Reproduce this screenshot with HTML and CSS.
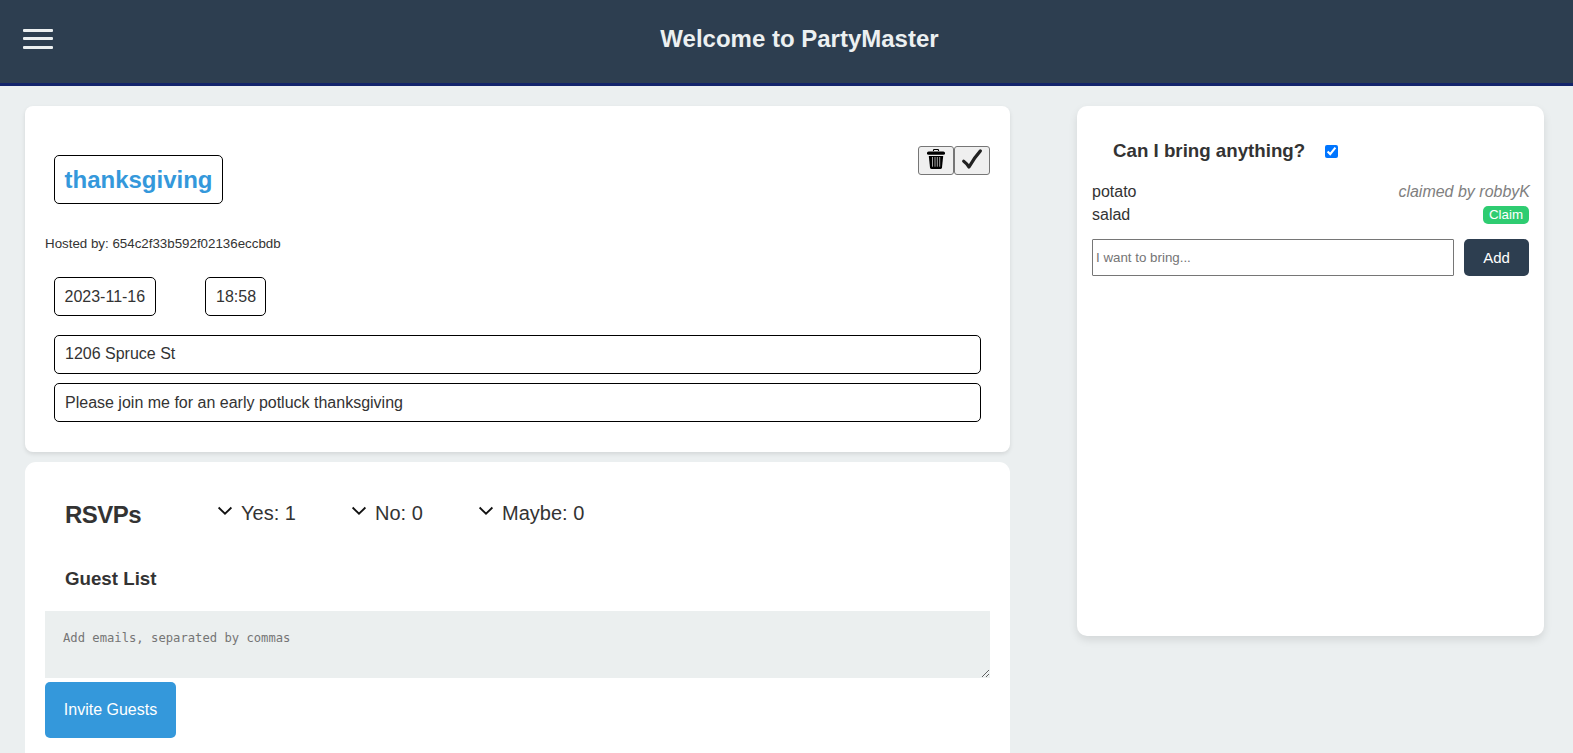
FILE: index.html
```html
<!DOCTYPE html>
<html lang="en">
<head>
<meta charset="utf-8">
<title>PartyMaster</title>
<link rel="stylesheet" href="styles.css">
</head>
<body>
<header class="header">
  <div class="burger"><span class="burger-line"></span><span class="burger-line"></span><span class="burger-line"></span></div>
  <h1 class="header-title">Welcome to PartyMaster</h1>
</header>
<main class="page">
  <div class="main-column">
    <section class="card event">
      <div class="event-top">
        <h2 class="field event-title">thanksgiving</h2>
        <div class="actions">
          <button class="icon-button" aria-label="Delete"><svg width="20" height="22" viewBox="0 0 20 22"><path d="M7.5 3V2.1Q7.5 1.5 8.2 1.5h3.6q.7 0 .7.6V3" fill="none" stroke="#000" stroke-width="1.1"/><rect x="1" y="3.4" width="18" height="3.4" rx="1.6"/><path d="M2.8 8h14.4l-1.2 11.4q-.2 1.6-1.8 1.6H5.8q-1.6 0-1.8-1.6z"/><path d="M6.5 9v9.7M9 9v9.7M11.3 9v9.7M13.7 9v9.7" stroke="#b8b8b8" stroke-width=".9"/></svg></button>
          <button class="icon-button" aria-label="Save"><svg width="22" height="22" viewBox="0 0 22 22"><path d="M2.7 13.2Q5.3 15 8 19 13 10 19.4 2.9" fill="none" stroke="#212121" stroke-width="3.2" stroke-linecap="round" stroke-linejoin="round"/></svg></button>
        </div>
      </div>
      <p class="host">Hosted by: 654c2f33b592f02136eccbdb</p>
      <div class="when"><span class="field date">2023-11-16</span><span class="field time">18:58</span></div>
      <p class="field address">1206 Spruce St</p>
      <p class="field">Please join me for an early potluck thanksgiving</p>
    </section>
    <section class="card rsvp">
      <div class="rsvp-top">
        <h2 class="rsvp-title">RSVPs</h2>
        <div class="count yes"><svg class="chevron" viewBox="0 0 16 10"><path d="M1.6 1.5 8 7.7l6.4-6.2"/></svg>Yes: 1</div>
        <div class="count no"><svg class="chevron" viewBox="0 0 16 10"><path d="M1.6 1.5 8 7.7l6.4-6.2"/></svg>No: 0</div>
        <div class="count"><svg class="chevron" viewBox="0 0 16 10"><path d="M1.6 1.5 8 7.7l6.4-6.2"/></svg>Maybe: 0</div>
      </div>
      <h3 class="guest-title">Guest List</h3>
      <textarea class="emails" placeholder="Add emails, separated by commas"></textarea>
      <button class="button invite">Invite Guests</button>
    </section>
  </div>
  <aside class="card bring">
    <div class="bring-top"><h3 class="bring-title">Can I bring anything?</h3><input class="toggle" type="checkbox" checked></div>
    <div class="item"><span>potato</span><em class="claimed">claimed by robbyK</em></div>
    <div class="item"><span>salad</span><button class="claim">Claim</button></div>
    <div class="add-row"><input class="wish" type="text" placeholder="I want to bring..."><button class="button add">Add</button></div>
  </aside>
</main>
</body>
</html>
```
FILE: styles.css
```css
* { box-sizing: border-box; }
body {
  margin: 0;
  height: 753px;
  overflow: hidden;
  background: #ebeff0;
  color: #333;
  font: 16px/17px "Liberation Sans", Arial, sans-serif;
}
h1, h2, h3, p { margin: 0; }
button { font-family: inherit; }

.header {
  display: flex;
  align-items: flex-start;
  height: 86px;
  padding: 25px 23px;
  background: #2d3e50;
  border-bottom: 3px solid #13246b;
  color: #ecf0f1;
}
.burger { display: flex; flex-direction: column; gap: 5px; width: 30px; padding-top: 4px; }
.burger-line { height: 3px; border-radius: 1px; background: #ecf0f1; }
.burger-line:last-child { margin-top: 1px; }
.header-title { flex: 1; padding-right: 4px; text-align: center; font-size: 24px; line-height: 28px; }

.page { display: flex; align-items: flex-start; gap: 67px; height: 667px; padding: 20px 0 0 25px; }
.main-column { display: flex; flex-direction: column; gap: 10px; width: 985px; }
.card { background: #fff; }

.event { height: 346px; padding: 40px 20px 0; border-radius: 8px; box-shadow: 0 2px 4px rgba(0, 0, 0, .1); }
.event-top { display: flex; justify-content: space-between; align-items: flex-start; }
.field { margin: 0 9px; padding: 10px; border: 1px solid #000; border-radius: 5px; }
.event-title { width: 169px; margin-top: 9px; padding-left: 9.5px; color: #3498db; font-size: 24px; line-height: 27px; }
.actions { display: flex; }
.icon-button {
  display: flex; justify-content: center; align-items: flex-start;
  width: 36px; height: 29px; padding: 1px 0 0;
  border: 1px solid #767676; border-radius: 3px; background: #efefef;
}
.host { margin-top: 31px; font-size: 13.33px; }
.when { display: flex; gap: 31px; margin: 25px 0 19px; }
.date { width: 102px; padding-left: 9.5px; white-space: nowrap; }
.time { width: 61px; padding-right: 9px; }
.address { margin-bottom: 9px; padding: 9px 10px 11px; }

.rsvp { height: 291px; padding: 39px 20px 0; border-radius: 11px 11px 0 0; }
.rsvp-top { display: flex; align-items: flex-start; padding-left: 20px; }
.rsvp-title { width: 152px; font-size: 24px; line-height: 28px; letter-spacing: -.5px; }
.count { display: flex; align-items: center; gap: 8px; font-size: 20px; line-height: 24px; }
.yes { width: 134px; }
.no { width: 127px; }
.chevron { width: 16px; height: 10px; margin-top: -4px; fill: none; stroke: #111; stroke-width: 1.8; }
.guest-title { margin: 39px 20px 0; font-size: 18.72px; line-height: 22px; }
.emails {
  display: block; width: 945px; height: 67px; margin-top: 21px; padding: 20px 18px;
  border: 0; background: #ebefef; font: 12.2px/15px "DejaVu Sans Mono", monospace;
}
.emails::placeholder, .wish::placeholder { color: #757575; }
.button { border: 0; border-radius: 5px; color: #fff; font-size: 16px; }
.invite { width: 131px; height: 56px; margin-top: 4px; background: #3498db; }

.bring { width: 467px; height: 530px; padding: 33px 15px 0; border-radius: 10px; box-shadow: 0 4px 8px rgba(0, 0, 0, .1); }
.bring-top { display: flex; align-items: center; height: 24px; padding-left: 21px; margin-bottom: 17px; }
.bring-title { font-size: 18.72px; line-height: 22px; }
.toggle { width: 13px; height: 13px; margin: 1px 0 0 20px; }
.item { display: flex; justify-content: space-between; align-items: center; height: 23px; }
.claimed { color: #808080; margin-right: -1px; }
.claim { width: 46px; height: 18px; padding: 0; border: 0; border-radius: 5px; background: #2ecc71; color: #fff; font-size: 13.33px; }
.add-row { display: flex; gap: 10px; margin-top: 13px; }
.wish { width: 362px; height: 37px; padding: 1px 3px; border: 1px solid #767676; border-radius: 1px; font: 13.33px "Liberation Sans", Arial, sans-serif; }
.add { width: 65px; height: 37px; background: #2d3e50; font-size: 15px; }
```
